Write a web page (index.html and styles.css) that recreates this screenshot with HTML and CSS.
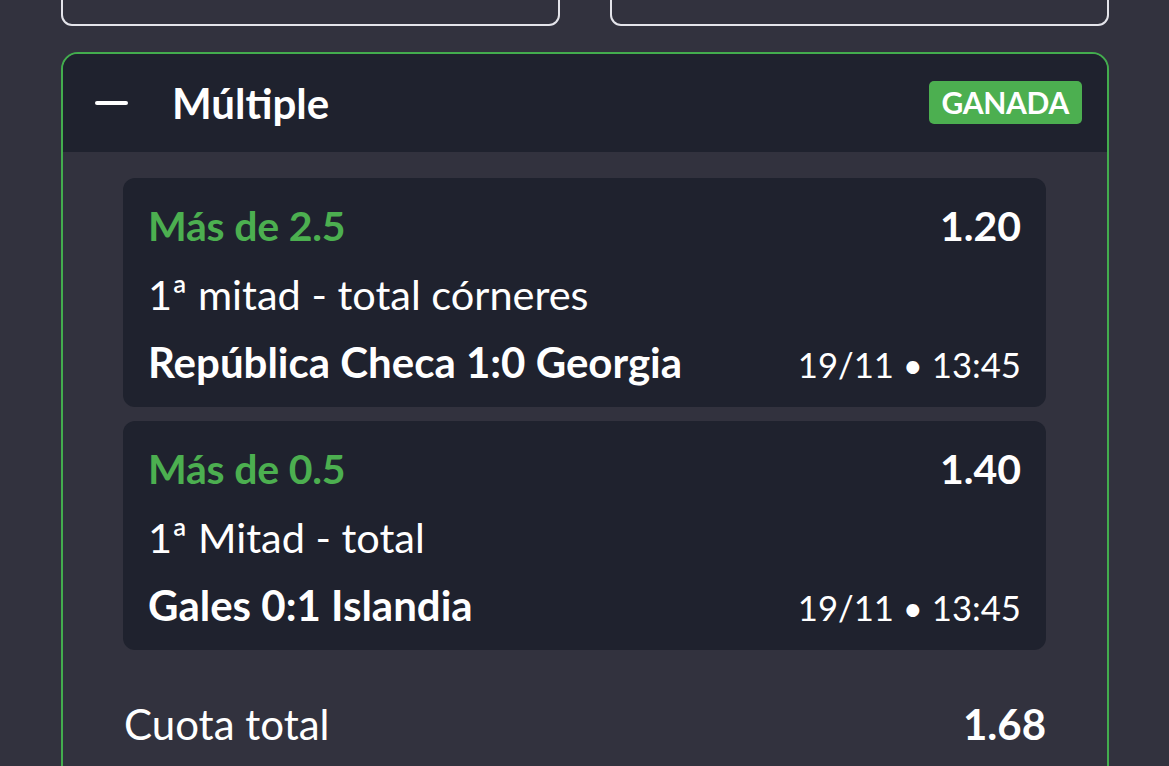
FILE: index.html
```html
<!DOCTYPE html>
<html lang="es">
<head>
<meta charset="utf-8">
<title>Múltiple</title>
<link rel="stylesheet" href="styles.css">
</head>
<body>
<div class="page">
  <div class="top-row">
    <div class="ghost-card"></div>
    <div class="ghost-card"></div>
  </div>

  <section class="bet">
    <header class="bet-head">
      <span class="collapse"></span>
      <h2 class="bet-title">Múltiple</h2>
      <span class="badge">GANADA</span>
    </header>

    <div class="bet-body">
      <article class="leg">
        <div class="leg-row">
          <span class="pick">Más de 2.5</span>
          <span class="odd">1.20</span>
        </div>
        <div class="leg-row">
          <span class="market">1ª mitad - total córneres</span>
        </div>
        <div class="leg-row">
          <span class="match">República Checa 1:0 Georgia</span>
          <span class="when">19/11 • 13:45</span>
        </div>
      </article>

      <article class="leg">
        <div class="leg-row">
          <span class="pick">Más de 0.5</span>
          <span class="odd">1.40</span>
        </div>
        <div class="leg-row">
          <span class="market">1ª Mitad - total</span>
        </div>
        <div class="leg-row">
          <span class="match">Gales 0:1 Islandia</span>
          <span class="when">19/11 • 13:45</span>
        </div>
      </article>

      <div class="total">
        <span class="total-label">Cuota total</span>
        <span class="total-value">1.68</span>
      </div>
    </div>
  </section>
</div>
</body>
</html>
```

FILE: styles.css
```css
* { box-sizing: border-box; }

html, body {
  margin: 0;
  height: 100%;
  overflow: hidden;
}

body {
  background: #32323e;
  color: #ffffff;
  font-family: Lato, "Noto Sans", sans-serif;
}

.page {
  padding: 0 60px 0 61px;
}

/* previous bet cards, scrolled mostly out of view */
.top-row {
  display: grid;
  grid-template-columns: 1fr 1fr;
  gap: 50px;
  margin-top: -75px;
}

.ghost-card {
  height: 101px;
  border: 2px solid #e4e4ea;
  border-radius: 11px;
}

.bet {
  margin-top: 26px;
  border: 2px solid #43ad4e;
  border-radius: 17px;
  overflow: hidden;
  min-height: 800px;
}

.bet-head {
  display: flex;
  align-items: center;
  height: 98px;
  padding: 0 25px 0 32px;
  background: #1f222e;
}

.collapse {
  width: 33px;
  height: 4px;
  border-radius: 2px;
  background: #ffffff;
  margin-right: 44px;
}

.bet-title {
  margin: 0;
  flex: 1;
  font-size: 42px;
  font-weight: 700;
  line-height: 1;
}

.badge {
  background: #4caf50;
  color: #ffffff;
  font-size: 30px;
  font-weight: 700;
  letter-spacing: -0.3px;
  line-height: 43px;
  height: 43px;
  padding: 0 13px;
  border-radius: 5px;
  margin-top: -2px;
}

.bet-body {
  padding: 26px 61px 0 60px;
  display: flex;
  flex-direction: column;
  gap: 14px;
}

.leg {
  background: #1f222e;
  border-radius: 12px;
  height: 229px;
  padding: 14px 25px 0 25px;
  display: flex;
  flex-direction: column;
}

.leg-row {
  display: flex;
  justify-content: space-between;
  align-items: baseline;
  height: 68px;
  line-height: 68px;
}

.pick {
  color: #4caf50;
  font-size: 41px;
  font-weight: 700;
  letter-spacing: -0.2px;
}

.odd {
  font-size: 41px;
  font-weight: 700;
}

.market {
  font-size: 41.5px;
  font-weight: 400;
}

.match {
  font-size: 42px;
  font-weight: 700;
}

.when {
  font-size: 34.7px;
  font-weight: 400;
}

.total {
  display: flex;
  justify-content: space-between;
  align-items: baseline;
  margin-top: 26px;
  padding-left: 1px;
  line-height: 68px;
}

.total-label {
  font-size: 42px;
  font-weight: 400;
}

.total-value {
  font-size: 42px;
  font-weight: 700;
}
```
